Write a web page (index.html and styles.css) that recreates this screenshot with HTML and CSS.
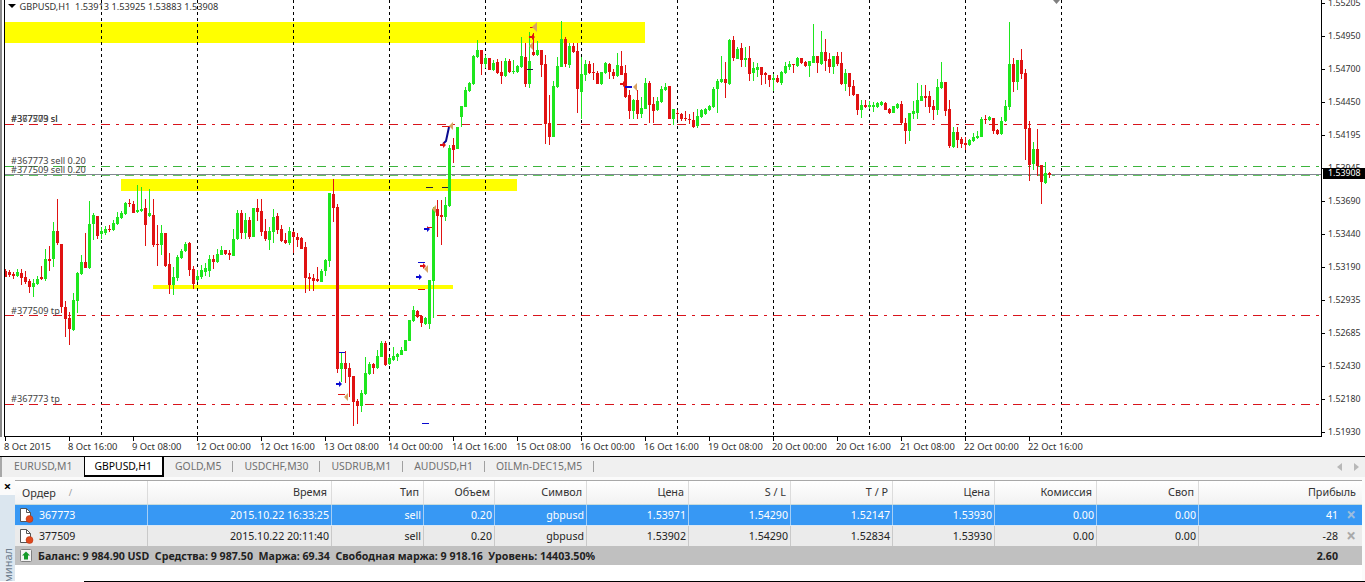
FILE: index.html
```html
<!DOCTYPE html>
<html lang="ru">
<head>
    <meta charset="UTF-8">
    <title>GBPUSD,H1</title>
    <link rel="stylesheet" href="styles.css">
</head>
<body>

    <div class="chartWindow">
        <div class="chartRow">
            <div class="leftFrame"></div>

            <svg class="plot" id="plot" viewBox="5 0 1316 436" width="1316" height="436">
                <!-- drawn zones -->
                <rect class="zone" x="5" y="22" width="640" height="21"/>
                <rect class="zone" x="121" y="179" width="396" height="12"/>
                <rect class="zone" x="153" y="285" width="300" height="4"/>

                <!-- day separators -->
                <g class="grid">
                    <line x1="101.5" y1="0" x2="101.5" y2="436"/>
                    <line x1="197.5" y1="0" x2="197.5" y2="436"/>
                    <line x1="293.5" y1="0" x2="293.5" y2="436"/>
                    <line x1="389.5" y1="0" x2="389.5" y2="436"/>
                    <line x1="485.5" y1="0" x2="485.5" y2="436"/>
                    <line x1="581.5" y1="0" x2="581.5" y2="436"/>
                    <line x1="677.5" y1="0" x2="677.5" y2="436"/>
                    <line x1="773.5" y1="0" x2="773.5" y2="436"/>
                    <line x1="869.5" y1="0" x2="869.5" y2="436"/>
                    <line x1="965.5" y1="0" x2="965.5" y2="436"/>
                    <line x1="1061.5" y1="0" x2="1061.5" y2="436"/>
                </g>

                <!-- order levels -->
                <g class="levelRed">
                    <line x1="5" y1="124.5" x2="1321" y2="124.5"/>
                    <line x1="5" y1="315.5" x2="1321" y2="315.5"/>
                    <line x1="5" y1="404.5" x2="1321" y2="404.5"/>
                </g>
                <g class="levelGreen">
                    <line x1="5" y1="166.5" x2="1321" y2="166.5"/>
                    <line x1="5" y1="175" x2="1321" y2="175"/>
                </g>
                <line class="priceLine" x1="5" y1="174.5" x2="1321" y2="174.5"/>

                <g id="candles"></g>

                <!-- trade marks -->
                <g class="markBlue">
                    <path d="M336 383h3v-2l3 3-3 3v-2h-3z"/>
                    <path d="M416 276h3v-2l3 3-3 3v-2h-3z"/>
                    <path d="M424 228h3v-2l3 3-3 3v-2h-3z"/>
                    <rect x="339" y="352" width="6" height="1"/>
                    <rect x="418" y="262" width="7" height="1"/>
                    <rect x="422" y="423" width="7" height="1"/>
                    <rect x="625" y="86" width="7" height="2"/>
                    <path class="trend" d="M443 144L446 141L449 127"/>
                </g>
                <g class="markRed">
                    <path d="M420 265h3v-2l3 3-3 3v-2h-3z"/>
                    <path d="M440 144h3v-2l3 3-3 3v-2h-3z"/>
                    <path d="M529 36h3v-2l3 3-3 3v-2h-3z"/>
                    <path d="M620 83h3v-2l3 3-3 3v-2h-3z"/>
                    <rect x="338" y="394" width="7" height="1"/>
                    <rect x="418" y="289" width="7" height="1"/>
                    <rect x="427" y="227" width="5" height="1"/>
                    <rect x="442" y="126" width="8" height="1"/>
                    <rect x="530" y="27" width="5" height="1"/>
                </g>
                <g class="markTan">
                    <path d="M344 397l4-4v8z"/>
                    <path d="M424 269l4-4v8z"/>
                    <path d="M432 209l4-4v8z"/>
                    <path d="M449 126l4-4v8z"/>
                    <path d="M532 27l5-5v10z"/>
                    <path d="M529 46l4-4v8z"/>
                    <path d="M633 87l4-4v8z"/>
                </g>
                <g class="markDark">
                    <rect x="426" y="187" width="7" height="1"/>
                    <rect x="442" y="187" width="6" height="1"/>
                    <rect x="527" y="69" width="6" height="1"/>
                </g>

                <path class="diamond" d="M1053 0h7l-3.500 4z"/>

                <!-- labels -->
                <path class="titleArrow" d="M8 4h8l-4 4z"/>
                <text class="title" x="19.500" y="10">GBPUSD,H1&#160; 1.53913 1.53925 1.53883 1.53908</text>
                <text class="orderLabel" x="11" y="122">#367773 sl</text>
                <text class="orderLabel" x="11" y="122">#377509 sl</text>
                <text class="orderLabel" x="11" y="164">#367773 sell 0.20</text>
                <text class="orderLabel" x="11" y="173">#377509 sell 0.20</text>
                <text class="orderLabel" x="11" y="314">#377509 tp</text>
                <text class="orderLabel" x="11" y="402">#367773 tp</text>
            </svg>

            <div class="priceAxis">
                <div>1.55205</div>
                <div>1.54950</div>
                <div>1.54700</div>
                <div>1.54450</div>
                <div>1.54195</div>
                <div>1.53945</div>
                <div>1.53690</div>
                <div>1.53440</div>
                <div>1.53190</div>
                <div>1.52935</div>
                <div>1.52685</div>
                <div>1.52430</div>
                <div>1.52180</div>
                <div>1.51930</div>
                <span class="priceTag">1.53908</span>
            </div>
        </div>

        <div class="timeAxis">
            <div>8 Oct 2015</div>
            <div>8 Oct 16:00</div>
            <div>9 Oct 08:00</div>
            <div>12 Oct 00:00</div>
            <div>12 Oct 16:00</div>
            <div>13 Oct 08:00</div>
            <div>14 Oct 00:00</div>
            <div>14 Oct 16:00</div>
            <div>15 Oct 08:00</div>
            <div>16 Oct 00:00</div>
            <div>16 Oct 16:00</div>
            <div>19 Oct 08:00</div>
            <div>20 Oct 00:00</div>
            <div>20 Oct 16:00</div>
            <div>21 Oct 08:00</div>
            <div>22 Oct 00:00</div>
            <div>22 Oct 16:00</div>
        </div>
    </div>

    <div class="tabs">
        <div class="tab first">EURUSD,M1</div>
        <div class="tab active">GBPUSD,H1</div>
        <div class="tab">GOLD,M5</div>
        <div class="tab">USDCHF,M30</div>
        <div class="tab">USDRUB,M1</div>
        <div class="tab">AUDUSD,H1</div>
        <div class="tab">OILMn-DEC15,M5</div>
        <div class="tabArrows">
            <svg width="5" height="8" viewBox="0 0 5 8"><path d="M5 0v8L0 4z"/></svg>
            <svg width="5" height="8" viewBox="0 0 5 8"><path d="M0 0v8l5-4z"/></svg>
        </div>
    </div>

    <div class="terminal">
        <div class="side">
            <div class="closeBtn">×</div>
            <div class="sideTab"><span>Терминал</span></div>
        </div>

        <div class="tableWrap">
            <div class="row head">
                <div class="left">Ордер <span class="sortMark">/</span></div>
                <div>Время</div>
                <div>Тип</div>
                <div>Объем</div>
                <div>Символ</div>
                <div>Цена</div>
                <div>S / L</div>
                <div>T / P</div>
                <div>Цена</div>
                <div>Комиссия</div>
                <div>Своп</div>
                <div class="profit">Прибыль</div>
            </div>

            <div class="row order selected">
                <div class="left">
                    <svg class="docIcon" width="16" height="17" viewBox="0 0 16 17"><path class="page" d="M1.500 1.500h6l4 4v9h-10z"/><path class="fold" d="M7.500 1.500v4h4"/><circle class="dot" cx="10.500" cy="12" r="3.500"/></svg>
                    367773
                </div>
                <div>2015.10.22 16:33:25</div>
                <div>sell</div>
                <div>0.20</div>
                <div>gbpusd</div>
                <div>1.53971</div>
                <div>1.54290</div>
                <div>1.52147</div>
                <div>1.53930</div>
                <div>0.00</div>
                <div>0.00</div>
                <div class="profit"><span>41</span><b class="closeOrder">×</b></div>
            </div>

            <div class="row order">
                <div class="left">
                    <svg class="docIcon" width="16" height="17" viewBox="0 0 16 17"><path class="page" d="M1.500 1.500h6l4 4v9h-10z"/><path class="fold" d="M7.500 1.500v4h4"/><circle class="dot" cx="10.500" cy="12" r="3.500"/></svg>
                    377509
                </div>
                <div>2015.10.22 20:11:40</div>
                <div>sell</div>
                <div>0.20</div>
                <div>gbpusd</div>
                <div>1.53902</div>
                <div>1.54290</div>
                <div>1.52834</div>
                <div>1.53930</div>
                <div>0.00</div>
                <div>0.00</div>
                <div class="profit"><span>-28</span><b class="closeOrder">×</b></div>
            </div>

            <div class="total">
                <svg class="upIcon" width="12" height="13" viewBox="0 0 12 13"><rect class="box" x="0.500" y="0.500" width="11" height="12" rx="1"/><path class="arrow" d="M6 2.500l4 4H8v4H4v-4H2z"/></svg>
                <span class="summary">Баланс: 9 984.90 USD&#160; Средства: 9 987.50&#160; Маржа: 69.34&#160; Свободная маржа: 9 918.16&#160; Уровень: 14403.50%</span>
                <span class="totalProfit">2.60</span>
            </div>
        </div>
    </div>
    <div class="bottomLine"></div>

    <script src="chart.js"></script>
</body>
</html>
```

FILE: styles.css
```css
html, body {
    margin: 0;
    padding: 0;
    width: 1365px;
    height: 582px;
    overflow: hidden;
    background: white;
    font-family: "Noto Sans", sans-serif;
}

.chartWindow {
    height: 456px;
    border-bottom: 1px solid black;
}

.chartRow {
    display: flex;
    height: 437px;
}

.leftFrame {
    width: 2px;
    margin-right: 2px;
    background: #8a8a8a;
}

.plot {
    display: block;
    flex: none;
    border-left: 1px solid black;
    border-bottom: 1px solid black;
    overflow: hidden;
}

.zone { fill: #ffff00; }

.grid line {
    stroke: black;
    stroke-dasharray: 3 3;
    shape-rendering: crispEdges;
}

.levelRed line {
    stroke: #d8141c;
    stroke-dasharray: 9 6 3 6;
    shape-rendering: crispEdges;
}

.levelGreen line {
    stroke: #3cb43c;
    stroke-dasharray: 9 6 3 6;
    shape-rendering: crispEdges;
}
.levelGreen line:last-child { stroke-width: 2; opacity: 0.8; }

.priceLine {
    stroke: #808890;
    shape-rendering: crispEdges;
}

.wick, .body { shape-rendering: crispEdges; }
.up { fill: #1ee61e; }
.down { fill: #e01212; }

.markBlue { fill: #0a0ad0; }
.markRed { fill: #e01212; }
.markTan { fill: #d8a262; }
.markDark { fill: #20203c; }

.trend {
    fill: none;
    stroke: #0a0a90;
    stroke-width: 2;
}

.diamond { fill: #808080; }
.titleArrow { fill: black; }

.title {
    font-size: 9.200px;
    fill: #333;
}

.orderLabel {
    font-size: 9.200px;
    fill: #444;
}

/* right axis */
.priceAxis {
    position: relative;
    flex: 1;
    border-left: 1px solid black;
    height: 437px;
    font-size: 8.800px;
    color: #333;
}

.priceAxis > div {
    height: 33px;
    line-height: 33px;
    padding-left: 6px;
    position: relative;
    top: -13px;
}
.priceAxis > div::before {
    content: "";
    position: absolute;
    left: 0;
    top: 16px;
    width: 3px;
    height: 1px;
    background: black;
}

.priceTag {
    position: absolute;
    left: 1px;
    right: 0;
    top: 168px;
    height: 11px;
    line-height: 11px;
    padding-left: 5px;
    background: black;
    color: white;
}

/* bottom axis */
.timeAxis {
    display: flex;
    height: 19px;
    padding-left: 4px;
    font-size: 9.400px;
    color: #333;
}

.timeAxis div {
    width: 64px;
    flex: none;
    padding-top: 3px;
    line-height: 13px;
    white-space: nowrap;
    position: relative;
    box-sizing: border-box;
}
.timeAxis div::before {
    content: "";
    position: absolute;
    left: 1px;
    top: 0;
    width: 1px;
    height: 4px;
    background: black;
}

/* chart tabs */
.tabs {
    display: flex;
    height: 20px;
    background: #f0f0f0;
    border-left: 2px solid #a8a8a8;
    font-size: 10.400px;
    color: #707070;
}

.tab {
    padding: 0 12px 0 11px;
    line-height: 19px;
    position: relative;
    white-space: nowrap;
}
.tab::after {
    content: "";
    position: absolute;
    right: 0;
    top: 4px;
    height: 11px;
    width: 1px;
    background: #a0a0a0;
}
.tab.first { padding: 0 12px; }
.tab.first::after { display: none; }

.tab.active {
    background: white;
    color: black;
    border: 1px solid black;
    border-top: none;
    border-right-width: 2px;
    border-bottom-width: 2px;
    height: 18px;
    padding: 0 10px 0 9px;
}
.tab.active::after { display: none; }

.tabArrows {
    margin-left: auto;
    display: flex;
    align-items: center;
    gap: 12px;
    padding-right: 6px;
}
.tabArrows svg { fill: #b8b8b8; }

/* terminal */
.terminal {
    display: flex;
    height: 104px;
    background: #fbfbfb;
    padding-top: 3px;
    box-sizing: border-box;
}

.side {
    width: 15px;
    flex: none;
    margin-top: -3px;
    display: flex;
    flex-direction: column;
}

.closeBtn {
    height: 18px;
    line-height: 18px;
    text-align: center;
    font-size: 13px;
    font-weight: bold;
    color: black;
}

.sideTab {
    flex: 1;
    background: #dbe6ef;
    overflow: hidden;
    padding-top: 53px;
    height: 30px;
}
.sideTab span {
    display: block;
    writing-mode: vertical-rl;
    transform: rotate(180deg);
    font-size: 11px;
    line-height: 15px;
    color: #6f8090;
    white-space: nowrap;
}

.tableWrap {
    width: 1347px;
    flex: none;
    border-top: 1px solid #a8a8a8;
    background: white;
    font-size: 10.600px;
}

.row {
    display: grid;
    grid-template-columns: 133px 184px 92px 71px 92px 102px 102px 102px 102px 102px 102px 163px;
}

.row > div {
    text-align: right;
    white-space: nowrap;
    border-right: 1px solid #c8d8e0;
    box-sizing: border-box;
    padding-right: 2px;
}

.row .left {
    display: flex;
    align-items: center;
    text-align: left;
}
.row .profit { border-right: none; }

.head {
    height: 24px;
    line-height: 22px;
    background: linear-gradient(#ffffff, #f2f2f2);
    border-bottom: 1px solid #c8dcdc;
    box-sizing: border-box;
    color: #333;
    font-size: 10.800px;
}
.head > div {
    border-right-color: #dcdcdc;
    padding-right: 4px;
}
.head .left {
    padding-left: 7px;
    gap: 13px;
}
.head .profit { padding-right: 6px; }

.sortMark { color: #999; font-size: 9px; }

.order {
    height: 20px;
    line-height: 20px;
    background: #ebebeb;
    color: #222;
}
.order > div { border-right-color: #c9c9c9; }
.order .left { gap: 4px; padding-left: 4px; }
.order .profit {
    display: flex;
    justify-content: flex-end;
    padding-right: 5px;
}
.order .profit span { margin-right: 7px; }

.selected {
    height: 21px;
    background: #3798f4;
    color: white;
    border-bottom: 1px solid #dbe8f4;
    box-sizing: border-box;
}
.selected > div { border-right-color: #a6cff5; }

.closeOrder {
    width: 12px;
    font-size: 17px;
    line-height: 19px;
    text-align: center;
    color: #a9a9a9;
}
.selected .closeOrder { color: #9cbddd; }

.docIcon { flex: none; }
.docIcon .page { fill: white; stroke: #555; }
.docIcon .fold { fill: none; stroke: #555; }
.docIcon .dot { fill: #e0481c; stroke: #b03010; stroke-width: 0.500; }

.total {
    display: flex;
    align-items: center;
    height: 19px;
    padding-left: 5px;
    background: #c0c0c0;
    font-weight: bold;
    color: #222;
    font-size: 10.650px;
}
.upIcon { flex: none; margin-right: 6px; }
.upIcon .box { fill: #f4f4f4; stroke: #808080; }
.upIcon .arrow { fill: #149a28; }

.summary { white-space: nowrap; }
.totalProfit {
    margin-left: auto;
    margin-right: 24px;
}

.bottomLine {
    height: 1px;
    margin-left: 84px;
    background: black;
}
```

FILE: chart.js
```js
// candles read off the chart, as color + bodyTop,bodyBottom,high,low
// each run has its own scale: rows were measured on 3x crops of the picture
let plot = document.getElementById("candles");
const NS = "http://www.w3.org/2000/svg";

let runs = [
    { x: 5, top: 180, rows: "r272,290,268,292 r276,284,270,290 r282,288,276,296 g276,288,268,290 r280,294,266,314 r292,306,274,312 r304,320,298,340 g308,322,296,352 g296,312,288,316 r292,296,258,300 g238,298,206,304 r238,242,198,274 g152,238,126,262 r154,190,56,194 r192,382,192,400 r380,416,362,472 r414,446,396,496 g360,450,340,452 g278,362,276,400 g246,282,226,286 r246,264,158,264 g132,264,64,268 g106,132,100,180 r108,168,108,178 g152,162,140,178 g148,158,138,166 r148,150,136,156 g130,150,120,152 g112,132,96,134 g98,114,94,116 g70,102,66,104 r68,70,56,82 r72,98,62,100 g90,96,16,100 g86,94,22,96 r84,136,56,198 g100,108,26,112 r104,196,56,200 r192,196,136,258 g158,194,136,226 r158,258,158,260 r252,316,220,342 g292,316,262,344 g232,294,226,304 g212,234,206,236 g192,214,186,216 r188,270,186,288 r268,312,258,326 g288,300,270,306 g270,292,254,296 g264,276,250,288 g238,272,224,290 r238,246,226,266 g222,246,206,248 g210,224,198,226 r210,222,210,226 r218,226,210,240 g176,228,146,228 g100,178,90,180 r100,158,90,176 g120,158,100,178 r120,172,110,176 g84,170,84,172 r84,96,56,124 r94,156,58,168 r154,178,116,182 g154,180,140,210 g112,156,88,190 r108,150,98,162 r148,182,136,186 r180,188,160,192 g154,188,140,194 r156,172,154,218 r170,180,160,200" },
    { x: 301, top: 170, rows: "r204,236,200,238 r232,324,216,370 r320,326,308,362 r324,332,312,362 r326,334,292,336 g302,336,296,336 g270,304,268,318 g70,272,68,290 r72,114,28,156 r112,598,102,610 g580,596,548,636 r580,596,542,640 r594,620,580,680 r618,696,618,768 r692,708,688,762 g670,708,660,726 g610,672,562,674 g582,612,576,614 r582,594,578,612 g558,594,540,596 g518,560,514,562 r518,584,514,588 g564,582,560,584 g558,570,532,574 g552,560,550,572 g540,554,532,556 g510,542,510,544 g450,514,450,514 g420,454,408,456 r424,440,420,444 r438,460,436,470 g444,462,440,466 g330,462,330,476 g118,332,112,444 r116,138,90,200 r136,140,90,224 g106,142,82,154 g-66,108,-75,112" },
    { x: 453, top: 10, rows: "r405,420,385,458 g350,416,350,418 g288,322,288,350 g240,290,230,292 g218,244,216,246 g138,222,136,224 g120,142,90,144 r120,162,120,196 g144,162,134,174 r144,180,144,180 g158,180,150,184 r156,190,146,192 r186,198,154,222 g152,198,144,200 r152,186,146,188 g182,186,150,192 g168,186,166,188 g138,172,82,174 r140,222,100,232 g152,222,66,234 r126,136,70,138 g120,136,94,138 r120,166,120,200 r162,342,134,402 r340,382,256,404 g228,380,212,382 g168,232,142,234 g88,170,34,172 r88,162,80,172 g108,164,100,174 r108,126,100,128 r122,236,100,310 g192,246,140,326 g162,194,150,214 r162,190,154,192 r186,190,160,210 r188,222,184,222 g186,222,186,224 g160,190,156,192 r162,186,160,208 r186,198,176,206 g164,198,130,200 r168,194,122,196 r190,260,166,264 r256,302,240,326 g270,302,268,326 r270,312,240,326 g294,312,262,324 g218,296,204,298 r220,284,212,338 r282,302,262,338" },
    { x: 657, top: 20, rows: "g244,270,232,272 g206,246,198,248 g200,210,190,212 r198,296,198,298 g266,298,266,316 r280,282,270,300 r282,296,280,304 r294,296,274,302 r296,298,282,312 r300,322,276,324 g288,318,268,324 g270,292,268,294 g266,282,264,284 g258,270,256,272 g206,262,200,264 g182,208,176,280 g178,186,108,188 r178,188,126,234 g60,192,58,194 r60,114,48,124 g86,116,80,118 r84,120,70,142 g114,120,80,140 r114,162,78,184 g144,158,126,182 g140,150,130,170 r142,164,142,196 r158,166,156,192 r166,180,164,200 g174,180,162,212 r174,186,164,188 g156,188,154,194 g138,160,126,162 g132,140,124,150 r132,136,132,158 g114,138,112,140 r114,130,114,132 r126,138,124,140 g124,138,124,172 g108,128,12,130 r108,130,108,158 g96,132,32,134 r96,122,56,152 r118,142,100,158 g108,142,108,162 r108,132,96,138 r130,192,96,196 g158,192,148,212 r158,202,158,228 r198,226,180,228 r222,270,222,284 g256,270,240,294 r256,262,240,264 g254,262,242,266 g254,260,246,276 g250,260,246,264 g246,256,242,258 r248,270,246,270 r266,280,264,282 g258,278,258,280 g252,264,248,266 r252,310,244,312 r308,332,294,372 g280,332,278,362 g274,282,244,298 g240,278,190,298 g228,242,194,244 r228,234,194,260 r228,262,212,280 r258,270,240,300 g202,270,176,284 g186,204,126,208 r186,272,186,288 r268,378,240,384 g336,382,320,384 r336,360,322,384 r356,372,350,384 r368,374,350,390 g360,376,358,378 g350,364,340,366 g348,354,334,356 g296,350,292,352 r296,298,286,312 g292,300,288,302 r294,332,294,342 r330,342,326,346" },
    { x: 1001, top: 0, rows: "g362,402,352,404 g318,364,300,366 g192,322,66,330 r192,246,174,276 g180,246,180,270 r180,222,148,238 r218,386,206,480 r384,496,364,542 g446,492,426,510 r446,498,386,528 r496,546,494,612 g518,550,486,552 r520,524,516,534" }
];

let addRect = (cls, x, y, w, h) => {
    let r = document.createElementNS(NS, "rect");
    r.setAttribute("class", cls);
    r.setAttribute("x", x);
    r.setAttribute("y", y);
    r.setAttribute("width", w);
    r.setAttribute("height", Math.max(h, 1));
    plot.appendChild(r);
};

runs.forEach((run) => {
    let x = run.x;
    run.rows.split(" ").forEach((row) => {
        let cls = row[0] === "g" ? "up" : "down";
        let v = row.slice(1).split(",").map((n) => Math.round(run.top + Number(n) / 3));
        addRect("wick " + cls, x, v[2], 1, v[3] - v[2]);
        addRect("body " + cls, x - 1, v[0], 3, v[1] - v[0]);
        x += 4;
    });
});
```
